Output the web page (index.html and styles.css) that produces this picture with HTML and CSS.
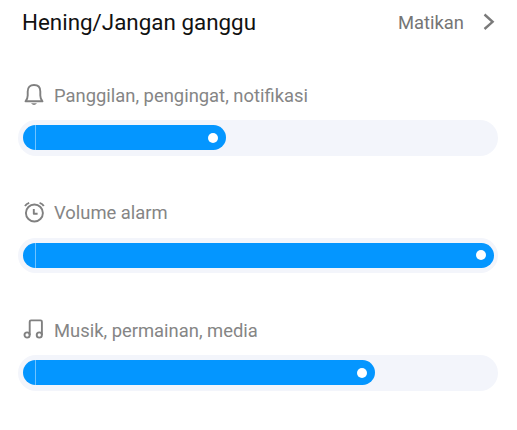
FILE: index.html
```
<!DOCTYPE html>
<html lang="id">
<head>
    <meta charset="UTF-8">
    <meta name="viewport" content="width=device-width, initial-scale=1.0">
    <title>Hening/Jangan ganggu</title>
    <link rel="stylesheet" href="styles.css">
</head>
<body>
    <header class="header">
        <h1 class="title">Hening/Jangan ganggu</h1>
        <div class="status">
            <span class="status-text">Matikan</span>
            <svg class="chevron" width="12" height="18" viewBox="0 0 12 18">
                <path d="M1.5 1.5 L9.6 8.8 L1.5 16"/>
            </svg>
        </div>
    </header>

    <main class="sliders">
        <section class="slider">
            <div class="label">
                <svg class="icon" width="22" height="24" viewBox="0 0 22 24">
                    <path d="M2.5 18.3 C4.3 16.4 4.7 15 4.7 12.5 V8.4 C4.7 4.4 7 2 11 2 S17.3 4.4 17.3 8.4 V12.5 C17.3 15 17.7 16.4 19.5 18.3 Z"/>
                    <path d="M8 20.2 H14 Q11 23.8 8 20.2 Z" class="solid"/>
                </svg>
                <span class="text">Panggilan, pengingat, notifikasi</span>
            </div>
            <div class="track">
                <div class="fill" style="width: 203px"><span class="knob"></span></div>
            </div>
        </section>

        <section class="slider">
            <div class="label">
                <svg class="icon" width="22" height="24" viewBox="0 0 22 24">
                    <circle cx="11.4" cy="12" r="8.5"/>
                    <path d="M10.8 8 V12.8 H14.6"/>
                    <path d="M2 5 Q3.3 2.7 6.2 1.8 M16.6 1.8 Q19.5 2.7 20.8 5"/>
                </svg>
                <span class="text">Volume alarm</span>
            </div>
            <div class="track">
                <div class="fill" style="width: 471px"><span class="knob"></span></div>
            </div>
        </section>

        <section class="slider">
            <div class="label">
                <svg class="icon" width="22" height="24" viewBox="0 0 22 24">
                    <circle cx="4.1" cy="17" r="2.6"/>
                    <circle cx="16.3" cy="17" r="2.6"/>
                    <path d="M6.7 17 V3.7 Q6.7 2.4 8 2.4 H17.6 Q18.9 2.4 18.9 3.7 V17"/>
                </svg>
                <span class="text">Musik, permainan, media</span>
            </div>
            <div class="track">
                <div class="fill" style="width: 352px"><span class="knob"></span></div>
            </div>
        </section>
    </main>
</body>
</html>
```
FILE: styles.css
```
* {
    box-sizing: border-box;
}
body {
    margin: 0;
    background-color: #fff;
    font-family: Roboto, sans-serif;
    overflow: hidden;
}
.header {
    display: flex;
    align-items: center;
    justify-content: space-between;
    height: 44px;
    padding: 0 22px 0 22px;
}
.title {
    margin: 0;
    font-size: 22.4px;
    font-weight: 400;
    color: #111;
}
.status {
    display: flex;
    align-items: center;
    gap: 19px;
}
.status-text {
    font-size: 18.4px;
    color: #757575;
}
.chevron {
    fill: none;
    stroke: #7a7a7a;
    stroke-width: 2.4;
}
.sliders {
    display: flex;
    flex-direction: column;
    gap: 44px;
    padding: 38px 19px 0 18px;
}
.slider {
    display: flex;
    flex-direction: column;
    gap: 12px;
}
.label {
    display: flex;
    align-items: center;
    gap: 9px;
    height: 26px;
    padding-left: 5px;
}
.icon {
    fill: none;
    stroke: #808080;
    stroke-width: 1.9;
    stroke-linejoin: round;
}
.solid {
    fill: #808080;
    stroke: none;
}
.text {
    font-size: 18.4px;
    color: #858585;
}
.track {
    height: 35.5px;
    padding: 5px;
    border-radius: 18px;
    background-color: #f3f5fb;
}
/* thin line marks the start of the bar */
.fill {
    display: flex;
    align-items: center;
    justify-content: flex-end;
    height: 25px;
    padding-right: 8px;
    border-radius: 13px;
    background: linear-gradient(#6fc3ff, #6fc3ff) 12px 0 / 1px 100% no-repeat #0496ff;
}
.knob {
    width: 10px;
    height: 10px;
    border-radius: 50%;
    background-color: #fff;
}
```
